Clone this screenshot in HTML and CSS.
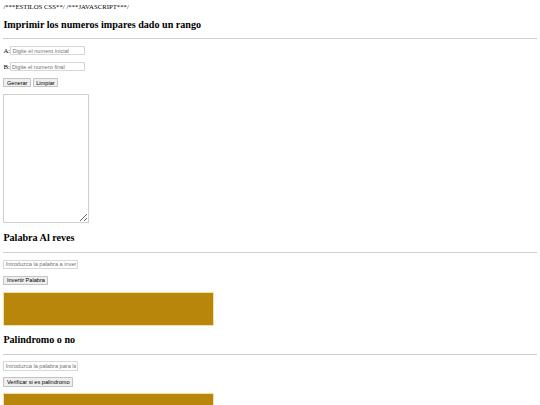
FILE: index.html
```html
<!DOCTYPE html>
<html lang="es">
<head>
    <meta charset="UTF-8">
    <meta name="viewport" content="width=device-width, initial-scale=1.0">
    <title>Ejercicios</title>
    <link rel="stylesheet" href="styles.css">
</head>
<body>
    /***ESTILOS CSS**/ /***JAVASCRIPT***/
    <h2>Imprimir los numeros impares dado un rango</h2>
    <hr>
    <p>A:<input type="text" id="numA" class="campo" placeholder="Digite el numero inicial"></p>
    <p>B:<input type="text" id="numB" class="campo" placeholder="Digite el numero final"></p>
    <p>
        <button class="boton" onclick="generar()">Generar</button>
        <button class="boton" onclick="limpiar()">Limpiar</button>
    </p>
    <textarea id="resultado" class="salida"></textarea>

    <h2>Palabra Al reves</h2>
    <hr>
    <p><input type="text" id="palabra" class="campo" placeholder="Introduzca la palabra a invertir"></p>
    <p><button class="boton" onclick="invertir()">Invertir Palabra</button></p>
    <div id="invertida" class="caja"></div>

    <h2>Palindromo o no</h2>
    <hr>
    <p><input type="text" id="palin" class="campo" placeholder="Introduzca la palabra para la verificacion"></p>
    <p><button class="boton" onclick="verificar()">Verificar si es palindromo</button></p>
    <div id="esPalindromo" class="caja"></div>

    <script>
        function generar() {
            const a = parseInt(document.getElementById('numA').value);
            const b = parseInt(document.getElementById('numB').value);
            let texto = '';
            for (let i = a; i <= b; i++) {
                if (i % 2 !== 0) {
                    texto += i + '\n';
                }
            }
            document.getElementById('resultado').value = texto;
        }

        function limpiar() {
            document.getElementById('numA').value = '';
            document.getElementById('numB').value = '';
            document.getElementById('resultado').value = '';
        }

        function invertir() {
            const palabra = document.getElementById('palabra').value;
            document.getElementById('invertida').textContent = palabra.split('').reverse().join('');
        }

        function verificar() {
            const palabra = document.getElementById('palin').value.toLowerCase();
            const reves = palabra.split('').reverse().join('');
            document.getElementById('esPalindromo').textContent = palabra === reves ? 'Es palindromo' : 'No es palindromo';
        }
    </script>
</body>
</html>
```

FILE: styles.css
```css
html {
    zoom: 0.421875;
}

body {
    font-family: "Liberation Serif", serif;
    font-size: 16px;
    margin: 8px;
    color: #000;
    background-color: #fff;
}

h2 {
    font-size: 24px;
    margin: 0.83em 0;
}

hr {
    border: none;
    border-top: 2px solid #cfcfcf;
    margin: 8px 0;
}

.campo {
    font-family: "Liberation Sans", Arial, sans-serif;
    font-size: 13.33px;
    width: 178px;
    height: 22px;
    padding: 1px 3px;
    border: 2px solid #d6d6d6;
    border-radius: 2px;
    box-sizing: border-box;
}

.boton {
    font-family: "Liberation Sans", Arial, sans-serif;
    font-size: 13.33px;
    height: 22px;
    padding: 1px 6px;
    background-color: #efefef;
    border: 2px solid #c4c4c4;
    border-radius: 2px;
}

.salida {
    width: 204px;
    height: 306px;
    border: 2px solid #cfcfcf;
    border-radius: 2px;
    box-sizing: border-box;
}

.caja {
    width: 500px;
    height: 81px;
    background-color: #b8860b;
    border: 3px solid #f7dfa0;
    box-sizing: border-box;
}
```
